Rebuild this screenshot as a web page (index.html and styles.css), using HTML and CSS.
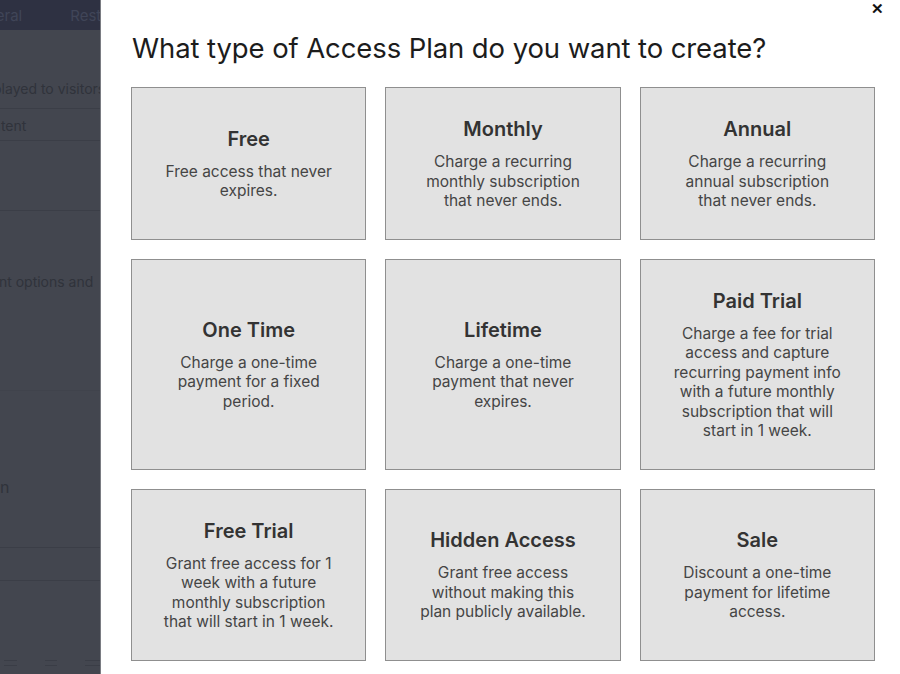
FILE: index.html
```html
<!DOCTYPE html>
<html lang="en">
<head>
  <meta charset="UTF-8">
  <meta name="viewport" content="width=device-width, initial-scale=1.0">
  <title>Create Access Plan</title>
  <link rel="stylesheet" href="styles.css">
</head>
<body>

  <div class="page">
    <!-- pagina de fondo, tapada por el overlay -->
    <div class="backdrop">
      <div class="tabs">
        <span class="tab tab-general">General</span>
        <span class="tab tab-res">Restrictions</span>
      </div>
      <div class="row row-visitors"><span class="clip clip-visitors">Description displayed to visitors</span></div>
      <div class="row row-content"><span class="clip clip-content">Content</span></div>
      <div class="row row-empty"></div>
      <div class="row row-options"><span class="clip clip-options">Payment options and</span></div>
      <div class="row row-n"><span class="clip clip-n">Plan</span></div>
      <div class="row row-line2"></div>
      <div class="footer-icons">
        <span class="mini"></span>
        <span class="mini"></span>
        <span class="mini mini-bars"></span>
      </div>
    </div>

    <div class="modal">
      <button class="close" aria-label="Close">&#x2715;</button>
      <h1>What type of Access Plan do you want to create?</h1>

      <div class="plans">
        <div class="plan">
          <h2>Free</h2>
          <p>Free access that never expires.</p>
        </div>
        <div class="plan">
          <h2>Monthly</h2>
          <p>Charge a recurring monthly subscription that never ends.</p>
        </div>
        <div class="plan">
          <h2>Annual</h2>
          <p>Charge a recurring annual subscription that never ends.</p>
        </div>
        <div class="plan">
          <h2>One Time</h2>
          <p>Charge a one-time payment for a fixed period.</p>
        </div>
        <div class="plan">
          <h2>Lifetime</h2>
          <p>Charge a one-time payment that never expires.</p>
        </div>
        <div class="plan">
          <h2>Paid Trial</h2>
          <p>Charge a fee for trial access and capture recurring payment info with a future monthly subscription that will start in 1 week.</p>
        </div>
        <div class="plan">
          <h2>Free Trial</h2>
          <p>Grant free access for 1 week with a future monthly subscription that will start in 1 week.</p>
        </div>
        <div class="plan">
          <h2>Hidden Access</h2>
          <p>Grant free access without making this plan publicly available.</p>
        </div>
        <div class="plan">
          <h2>Sale</h2>
          <p>Discount a one-time payment for lifetime access.</p>
        </div>
      </div>
    </div>
  </div>

</body>
</html>
```

FILE: styles.css
```css
html, body {
  margin: 0;
  height: 100%;
}

body {
  font-family: 'Inter', 'Noto Sans', sans-serif;
  color: #222;
  overflow: hidden;
}

.page {
  display: flex;
  height: 674px;
}

/* fondo oscurecido */
.backdrop {
  width: 100px;
  flex-shrink: 0;
  background-color: #43464f;
  border-right: 1px solid #7a7c82;
  overflow: hidden;
  color: #30333b;
  font-size: 14px;
  display: flex;
  flex-direction: column;
}

.tabs {
  height: 30px;
  flex-shrink: 0;
  background-color: #2e3142;
  display: flex;
  align-items: center;
  color: #404558;
  font-size: 15px;
  white-space: nowrap;
}

.tab-general {
  margin-left: -33px;
}

.tab-res {
  margin-left: 48px;
}

.row {
  box-sizing: border-box;
  flex-shrink: 0;
  white-space: nowrap;
  border-bottom: 1px solid #3b3e47;
  line-height: 20px;
}

.clip {
  display: block;
}

.row-visitors {
  height: 79px;
  padding-top: 49px;
}

.clip-visitors {
  margin-left: -106px;
}

.row-content {
  height: 32px;
  padding-top: 7px;
}

.clip-content {
  margin-left: -26px;
}

.row-empty {
  height: 70px;
}

.row-options {
  height: 180px;
  padding-top: 61px;
  border-bottom-color: #40434c;
}

.clip-options {
  margin-left: -46px;
}

.row-n {
  height: 157px;
  padding-top: 86px;
  font-size: 16px;
}

.clip-n {
  margin-left: -23px;
}

.row-line2 {
  height: 33px;
}

.footer-icons {
  display: flex;
  gap: 28px;
  padding-left: 4px;
  margin-top: auto;
  margin-bottom: 8px;
}

.mini {
  width: 14px;
  height: 4px;
  border-top: 1px solid #3a3d46;
  border-bottom: 1px solid #3a3d46;
}

.mini-bars {
  width: 16px;
}

/* modal */
.modal {
  position: relative;
  flex: 1;
  background-color: #fff;
  padding: 0 25px 0 30px;
}

.close {
  position: absolute;
  top: 0;
  right: 16px;
  background: none;
  border: none;
  font-size: 15px;
  font-weight: bold;
  color: #111;
  padding: 0;
  cursor: pointer;
}

h1 {
  font-size: 27.5px;
  font-weight: 400;
  margin: 31px 0 22px 1px;
  color: #1c1c1c;
  letter-spacing: -0.1px;
}

.plans {
  display: grid;
  grid-template-columns: repeat(3, 1fr);
  gap: 19px;
}

.plan {
  background-color: #e2e2e2;
  border: 1px solid #8f8f8f;
  padding: 29px 30px 28px;
  text-align: center;
  display: flex;
  flex-direction: column;
  justify-content: center;
}

.plan h2 {
  font-size: 20px;
  font-weight: 600;
  line-height: 24px;
  margin: 0 0 11px;
  color: #333;
}

.plan p {
  font-size: 15.5px;
  line-height: 19.5px;
  margin: 0;
  color: #454545;
}
```
